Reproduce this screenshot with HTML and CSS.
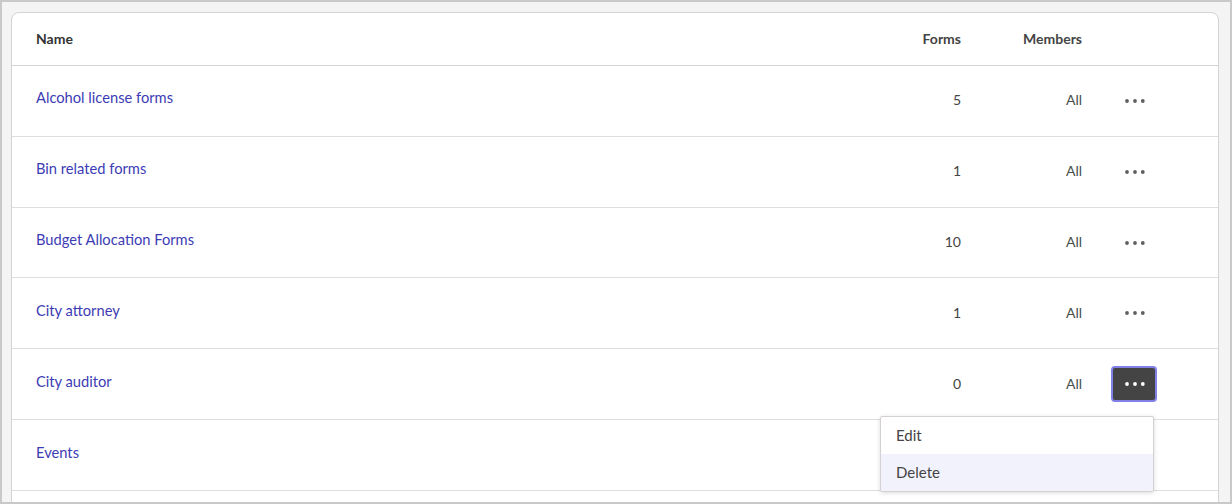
FILE: index.html
```html
<!DOCTYPE html>
<html lang="en">
<head>
<meta charset="utf-8">
<title>Groups</title>
<link rel="stylesheet" href="styles.css">
</head>
<body>
<div class="frame">
  <div class="card">
    <div class="row head">
      <div class="cell name">Name</div>
      <div class="cell num">Forms</div>
      <div class="cell num">Members</div>
      <div class="cell act"></div>
    </div>
    <div class="row">
      <div class="cell name"><a href="#">Alcohol license forms</a></div>
      <div class="cell num">5</div>
      <div class="cell num members">All</div>
      <div class="cell act"><button class="more" aria-label="More actions"><svg viewBox="0 0 24 6" width="24" height="6"><circle cx="4" cy="3" r="1.9"/><circle cx="12" cy="3" r="1.9"/><circle cx="19.8" cy="3" r="1.9"/></svg></button></div>
    </div>
    <div class="row">
      <div class="cell name"><a href="#">Bin related forms</a></div>
      <div class="cell num">1</div>
      <div class="cell num members">All</div>
      <div class="cell act"><button class="more" aria-label="More actions"><svg viewBox="0 0 24 6" width="24" height="6"><circle cx="4" cy="3" r="1.9"/><circle cx="12" cy="3" r="1.9"/><circle cx="19.8" cy="3" r="1.9"/></svg></button></div>
    </div>
    <div class="row">
      <div class="cell name"><a href="#">Budget Allocation Forms</a></div>
      <div class="cell num">10</div>
      <div class="cell num members">All</div>
      <div class="cell act"><button class="more" aria-label="More actions"><svg viewBox="0 0 24 6" width="24" height="6"><circle cx="4" cy="3" r="1.9"/><circle cx="12" cy="3" r="1.9"/><circle cx="19.8" cy="3" r="1.9"/></svg></button></div>
    </div>
    <div class="row">
      <div class="cell name"><a href="#">City attorney</a></div>
      <div class="cell num">1</div>
      <div class="cell num members">All</div>
      <div class="cell act"><button class="more" aria-label="More actions"><svg viewBox="0 0 24 6" width="24" height="6"><circle cx="4" cy="3" r="1.9"/><circle cx="12" cy="3" r="1.9"/><circle cx="19.8" cy="3" r="1.9"/></svg></button></div>
    </div>
    <div class="row">
      <div class="cell name"><a href="#">City auditor</a></div>
      <div class="cell num">0</div>
      <div class="cell num members">All</div>
      <div class="cell act">
        <button class="more open" aria-label="More actions" aria-expanded="true"><svg viewBox="0 0 24 6" width="24" height="6"><circle cx="4" cy="3" r="1.9"/><circle cx="12" cy="3" r="1.9"/><circle cx="19.8" cy="3" r="1.9"/></svg></button>
        <ul class="menu">
          <li class="item">Edit</li>
          <li class="item hover">Delete</li>
        </ul>
      </div>
    </div>
    <div class="row">
      <div class="cell name"><a href="#">Events</a></div>
      <div class="cell num"></div>
      <div class="cell num members"></div>
      <div class="cell act"></div>
    </div>
  </div>
</div>
</body>
</html>
```

FILE: styles.css
```css
html, body {
  margin: 0;
  padding: 0;
}

body {
  font-family: Lato, "Open Sans", sans-serif;
  color: #333;
}

.frame {
  box-sizing: border-box;
  width: 1232px;
  height: 504px;
  border: 2px solid #c9c9c9;
  background: #f4f4f4;
  padding: 10px 11px 0 9px;
  overflow: hidden;
}

.card {
  background: #fff;
  border: 1px solid #d3d3d3;
  border-radius: 8px;
  min-height: 600px;
}

.row {
  display: grid;
  grid-template-columns: 1fr 100px 121px 112px;
  box-sizing: border-box;
  height: 70.83px;
  border-bottom: 1px solid #dedede;
  align-items: center;
}

.row.head {
  height: 53px;
  border-bottom-color: #d3d3d3;
  font-weight: 700;
  font-size: 14px;
  color: #333;
}

.cell {
  padding: 0 24px 2px;
  font-size: 14px;
}

.cell.name {
  padding-bottom: 7px;
}

.row.head .cell {
  padding-bottom: 2px;
}

.cell.name a {
  color: #3c3cb4;
  text-decoration: none;
  font-size: 14.7px;
}

.cell.num {
  text-align: right;
  color: #444;
}

.cell.members {
  color: #45504a;
}

.cell.act {
  position: relative;
  padding: 0 0 0 5px;
  display: flex;
  align-items: center;
}

.more {
  box-sizing: border-box;
  width: 46px;
  height: 36px;
  border: 2px solid transparent;
  border-radius: 4px;
  background: transparent;
  padding: 0;
  display: flex;
  align-items: center;
  justify-content: center;
  fill: #5f5f5f;
  cursor: pointer;
}

.more svg {
  margin-left: 1px;
}

.more.open {
  background: #444;
  border-color: #8080e6;
  fill: #fff;
}

.menu {
  position: absolute;
  top: 50px;
  right: 64px;
  width: 274px;
  box-sizing: border-box;
  margin: 0;
  padding: 0;
  list-style: none;
  background: #fff;
  border: 1px solid #d6d1d1;
  border-radius: 2px;
  box-shadow: 0 1px 4px rgba(0, 0, 0, 0.15);
  z-index: 2;
}

.item {
  height: 37px;
  line-height: 37px;
  padding: 0 15px;
  font-size: 15px;
  color: #444;
}

.item.hover {
  background: #f2f2fc;
}
```
